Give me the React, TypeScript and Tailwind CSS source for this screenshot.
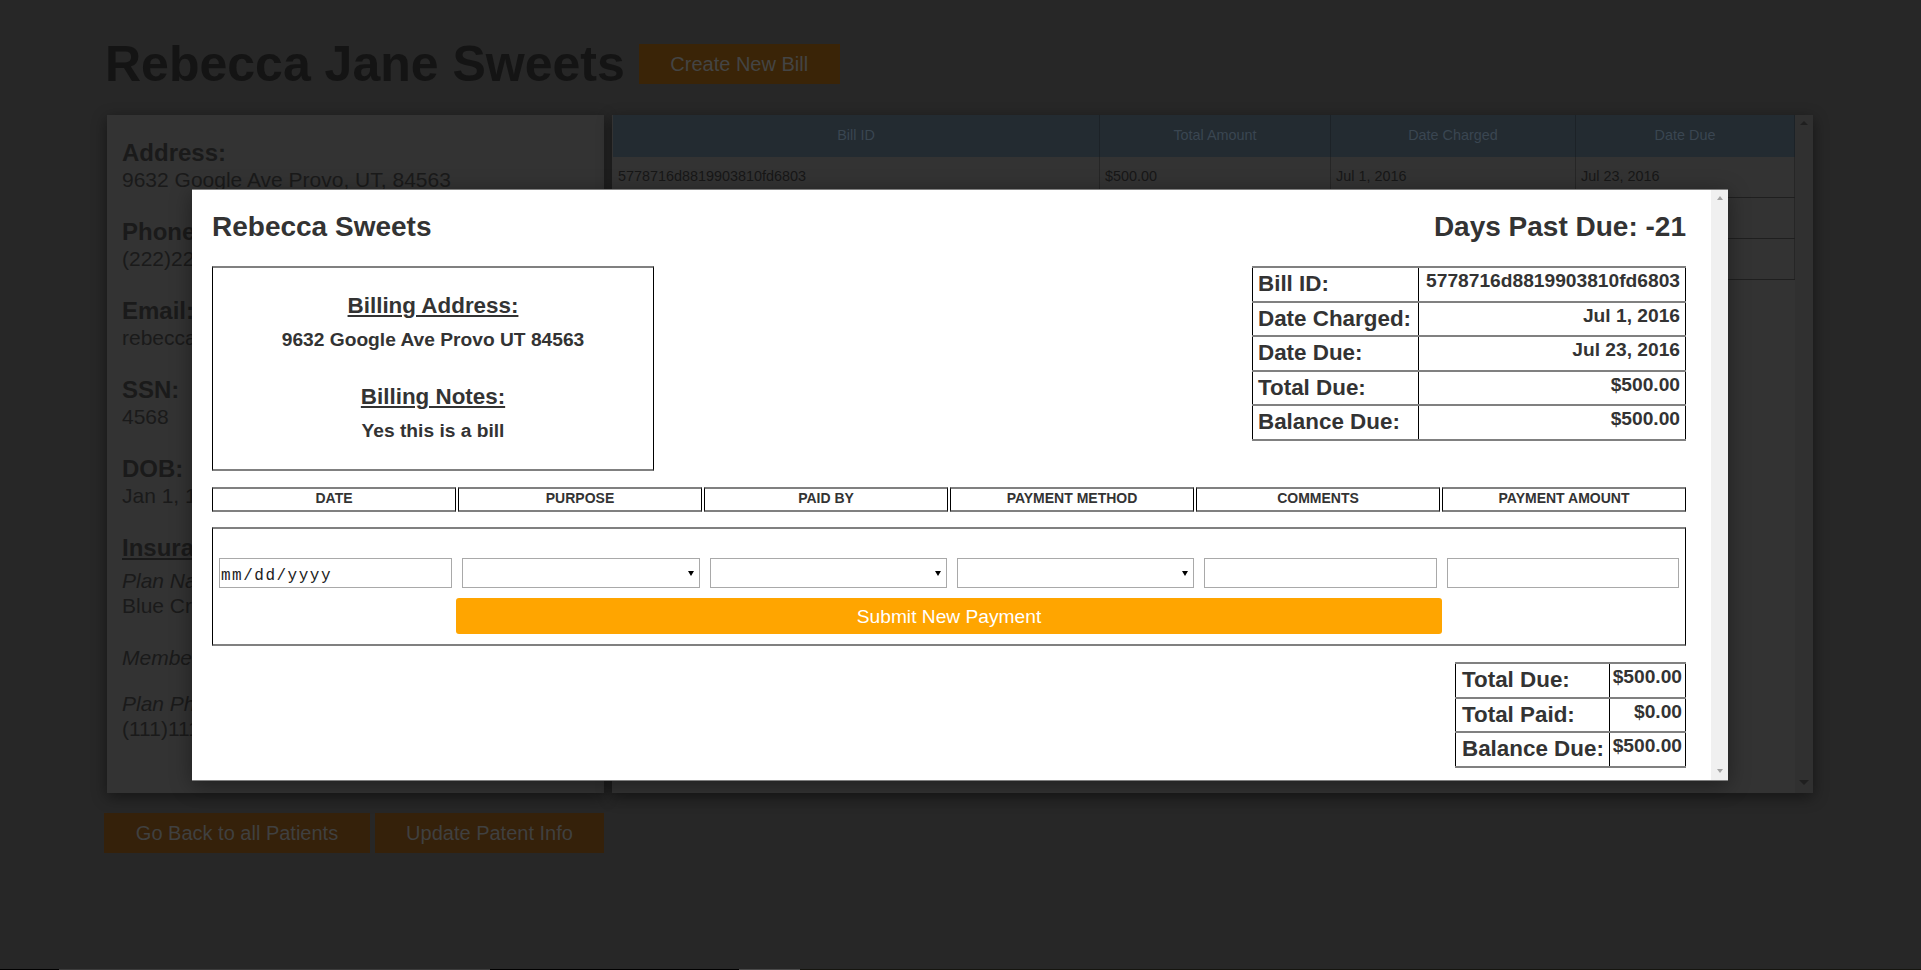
import React from "react";

const leftGroups = [
  { label: "Address:", value: "9632 Google Ave Provo, UT, 84563" },
  { label: "Phone:", value: "(222)222-2222" },
  { label: "Email:", value: "rebecca@sweets.com" },
  { label: "SSN:", value: "4568" },
  { label: "DOB:", value: "Jan 1, 1990" },
];

const bills = [
  ["5778716d8819903810fd6803", "$500.00", "Jul 1, 2016", "Jul 23, 2016"],
  ["5778716d8819903810fd6804", "$250.00", "Jun 12, 2016", "Jul 2, 2016"],
  ["5778716d8819903810fd6805", "$120.00", "May 3, 2016", "May 30, 2016"],
];

const billInfo = [
  ["Bill ID:", "5778716d8819903810fd6803"],
  ["Date Charged:", "Jul 1, 2016"],
  ["Date Due:", "Jul 23, 2016"],
  ["Total Due:", "$500.00"],
  ["Balance Due:", "$500.00"],
];

const summary = [
  ["Total Due:", "$500.00"],
  ["Total Paid:", "$0.00"],
  ["Balance Due:", "$500.00"],
];

const headers = ["DATE", "PURPOSE", "PAID BY", "PAYMENT METHOD", "COMMENTS", "PAYMENT AMOUNT"];

function SelectBox() {
  return (
    <div className="flex h-[30px] flex-1 items-center justify-end border border-[#a9a9a9] bg-white pr-[5px]">
      <div className="h-0 w-0 border-x-[3px] border-t-[5px] border-x-transparent border-t-black" />
    </div>
  );
}

export default function App() {
  return (
    <div className="relative h-[970px] w-full overflow-hidden bg-[#272727] font-['Liberation_Sans',Arial,sans-serif]">
      <div className="pl-[105px] pt-[38px]">
        <div className="flex items-center gap-[14px]">
          <h1 className="text-[50px] font-bold leading-[52px] text-[#141414]">Rebecca Jane Sweets</h1>
          <div className="flex h-[40px] w-[201px] items-center justify-center bg-[#3a2407] text-[20px] text-[#444444]">
            Create New Bill
          </div>
        </div>

        <div className="ml-[2px] mt-[25px] flex gap-[8px]">
          {/* left panel */}
          <div className="h-[678px] w-[497px] bg-[#333333] px-[15px] pt-[24px] text-[#1a1a1a] shadow-[0_4px_14px_rgba(0,0,0,0.45)]">
            {leftGroups.map((g) => (
              <div key={g.label} className="mb-[26px]">
                <div className="text-[24px] font-bold leading-[28px]">{g.label}</div>
                <div className="text-[21px] leading-[25px]">{g.value}</div>
              </div>
            ))}
            <div className="text-[24px] font-bold leading-[28px] underline">Insurance:</div>
            <div className="mt-[6px] text-[21px] italic leading-[25px]">Plan Name:</div>
            <div className="text-[21px] leading-[25px]">Blue Cross</div>
            <div className="mt-[27px] text-[21px] italic leading-[25px]">Member ID:</div>
            <div className="mt-[21px] text-[21px] italic leading-[25px]">Plan Phone:</div>
            <div className="text-[21px] leading-[25px]">(111)111-1111</div>
          </div>

          {/* bills table panel */}
          <div className="flex h-[678px] w-[1201px] bg-[#333333] pl-[1px] shadow-[0_4px_14px_rgba(0,0,0,0.45)]">
            <div className="flex-1">
              <div className="grid h-[42px] grid-cols-[487px_231px_245px_219px] bg-[#232b31] text-[14.4px] text-[#3a4651]">
                {["Bill ID", "Total Amount", "Date Charged", "Date Due"].map((h) => (
                  <div key={h} className="flex items-center justify-center border-r border-[#1c2227]">
                    {h}
                  </div>
                ))}
              </div>
              {bills.map((row, i) => (
                <div
                  key={i}
                  className="grid h-[41px] grid-cols-[487px_231px_245px_219px] border-b border-[#1f1f1f] text-[14.4px] text-[#171717]"
                >
                  {row.map((c, j) => (
                    <div key={j} className="flex items-center border-r border-[#262626] pl-[5px]">
                      {c}
                    </div>
                  ))}
                </div>
              ))}
            </div>
            <div className="flex w-[18px] flex-col items-center justify-between bg-[#303030] pb-[8px] pt-[6px]">
              <div className="h-0 w-0 border-x-[4px] border-b-[4px] border-x-transparent border-b-[#1f1f1f]" />
              <div className="h-0 w-0 border-x-[5px] border-t-[5px] border-x-transparent border-t-[#1f1f1f]" />
            </div>
          </div>
        </div>

        <div className="-ml-[1px] mt-[20px] flex gap-[5px]">
          <div className="flex h-[40px] w-[266px] items-center justify-center bg-[#35210a] text-[20px] text-[#404040]">
            Go Back to all Patients
          </div>
          <div className="flex h-[40px] w-[229px] items-center justify-center bg-[#35210a] text-[20px] text-[#404040]">
            Update Patent Info
          </div>
        </div>
      </div>

      {/* modal */}
      <div className="absolute left-[192px] top-[189px] flex h-[592px] w-[1536px] border-y border-[#808080] bg-white shadow-[0_4px_20px_rgba(0,0,0,0.4)]">
        <div className="flex-1 overflow-hidden pl-[20px] pr-[25px] pt-[21px] text-[#333]">
          <div className="flex items-start justify-between">
            <h2 className="text-[28px] font-bold leading-[32px]">Rebecca Sweets</h2>
            <h2 className="text-[28px] font-bold leading-[32px]">Days Past Due: -21</h2>
          </div>

          <div className="mt-[23px] flex items-start justify-between">
            <div className="w-[442px] border-x border-y-2 border-x-black border-y-[#808080] pb-[27px] pt-[25px] text-center">
              <div className="text-[22.4px] font-bold leading-[26px] underline">Billing Address:</div>
              <div className="mt-[10px] text-[19.2px] font-bold leading-[22px]">9632 Google Ave Provo UT 84563</div>
              <div className="mt-[33px] text-[22.4px] font-bold leading-[26px] underline">Billing Notes:</div>
              <div className="mt-[10px] text-[19.2px] font-bold leading-[22px]">Yes this is a bill</div>
            </div>

            <div className="w-[434px] border-t-2 border-[#808080] font-bold">
              {billInfo.map(([k, v]) => (
                <div key={k} className="flex border-b-2 border-[#808080]">
                  <div className="h-[32.6px] w-[167px] border-x border-black pl-[5px] pt-[3px] text-[22.4px] leading-[25px]">
                    {k}
                  </div>
                  <div className="h-[32.6px] w-[267px] border-r border-black pr-[5px] pt-[2px] text-right text-[19.2px] leading-[22px]">
                    {v}
                  </div>
                </div>
              ))}
            </div>
          </div>

          <div className="mt-[16px] flex gap-[2px]">
            {headers.map((h) => (
              <div
                key={h}
                className="h-[25px] flex-1 border-x border-y-2 border-x-black border-y-[#808080] text-center text-[14px] font-bold leading-[19px]"
              >
                {h}
              </div>
            ))}
          </div>

          <div className="mt-[15px] border-x border-y-2 border-x-black border-y-[#808080] pb-[10px] pt-[29px]">
            <div className="flex gap-[10px] px-[6px]">
              <div className="h-[30px] flex-1 border border-[#a9a9a9] bg-white pl-[1px] pt-[7px] font-['Liberation_Mono',monospace] text-[16px] leading-[20px] tracking-[1.5px] text-[#222]">
                mm/dd/yyyy
              </div>
              <SelectBox />
              <SelectBox />
              <SelectBox />
              <div className="h-[30px] flex-1 border border-[#a9a9a9] bg-white" />
              <div className="h-[30px] flex-1 border border-[#a9a9a9] bg-white" />
            </div>
            <div className="mx-auto mt-[10px] flex h-[36px] w-[67%] items-center justify-center rounded-[3px] bg-[#ffa500] pt-[2px] text-[19.2px] text-white">
              Submit New Payment
            </div>
          </div>

          <div className="mt-[16px] flex justify-end">
            <div className="w-[231px] border-t-2 border-[#808080] font-bold">
              {summary.map(([k, v]) => (
                <div key={k} className="flex border-b-2 border-[#808080]">
                  <div className="h-[32.6px] w-[155px] border-x border-black pl-[6px] pt-[3px] text-[22.4px] leading-[25px]">
                    {k}
                  </div>
                  <div className="h-[32.6px] w-[76px] border-r border-black pr-[3px] pt-[2px] text-right text-[19.2px] leading-[22px]">
                    {v}
                  </div>
                </div>
              ))}
            </div>
          </div>
        </div>
        <div className="flex w-[17px] flex-col items-center justify-between bg-[#f0f0f0] pb-[7px] pt-[6px]">
          <div className="h-0 w-0 border-x-[3.5px] border-b-[4px] border-x-transparent border-b-[#a3a3a3]" />
          <div className="h-0 w-0 border-x-[3.5px] border-t-[4px] border-x-transparent border-t-[#a3a3a3]" />
        </div>
      </div>

      {/* bottom edge strip */}
      <div className="absolute bottom-0 left-0 flex h-[1px] w-full">
        <div className="w-[59px] bg-black" />
        <div className="w-[431px] bg-[#3c3c3c]" />
        <div className="w-[249px] bg-black" />
        <div className="w-[61px] bg-[#4a4a4a]" />
        <div className="flex-1 bg-[#15150f]" />
      </div>
    </div>
  );
}
